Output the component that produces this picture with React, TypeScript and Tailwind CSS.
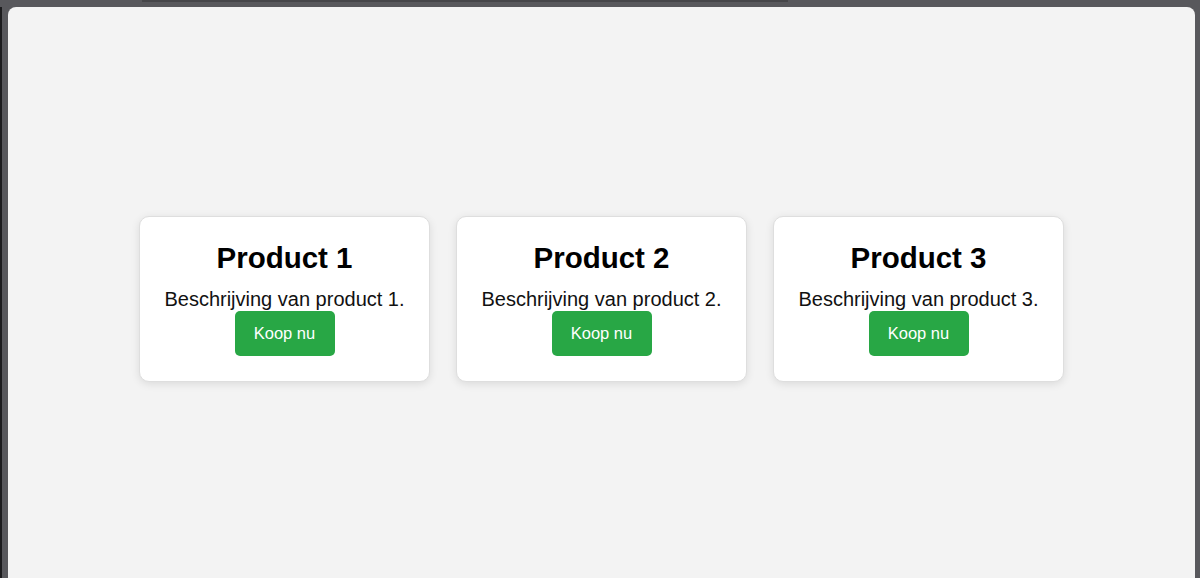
import React from 'react';

const products = [
  { id: 1, name: 'Product 1', description: 'Beschrijving van product 1.' },
  { id: 2, name: 'Product 2', description: 'Beschrijving van product 2.' },
  { id: 3, name: 'Product 3', description: 'Beschrijving van product 3.' },
];

const ProductCard: React.FC<{ name: string; description: string }> = ({ name, description }) => (
  <div className="w-[291px] h-[166px] bg-white rounded-[10px] border border-[#dedede] shadow-[0_2px_8px_rgba(0,0,0,0.1)] flex flex-col items-center pt-[24px]">
    <h2 className="text-[29.5px] leading-[34px] font-bold text-black">{name}</h2>
    <p className="text-[20px] leading-[23px] text-[#111] mt-[13px]">{description}</p>
    <button className="w-[100px] h-[45px] bg-[#28a745] text-white text-[16.5px] rounded-[5px]">
      Koop nu
    </button>
  </div>
);

export default function App() {
  return (
    <div className="h-[578px] w-[1200px] bg-[#58585c] flex flex-col overflow-hidden font-['Liberation_Sans',Arial,sans-serif]">
      <div className="h-[7px] flex shrink-0">
        <div className="w-[142px]" />
        <div className="w-[646px] h-[2px] bg-[#464649]" />
      </div>
      <div className="flex flex-1">
        <div className="w-[2px] bg-[#1c1c1e]" />
        <div className="w-[6px]" />
        <main className="flex-1 bg-[#f3f3f3] rounded-t-[8px] flex justify-center gap-[26px] pt-[209px]">
          {products.map(p => (
            <ProductCard key={p.id} name={p.name} description={p.description} />
          ))}
        </main>
        <div className="w-[5px]" />
      </div>
    </div>
  );
}
